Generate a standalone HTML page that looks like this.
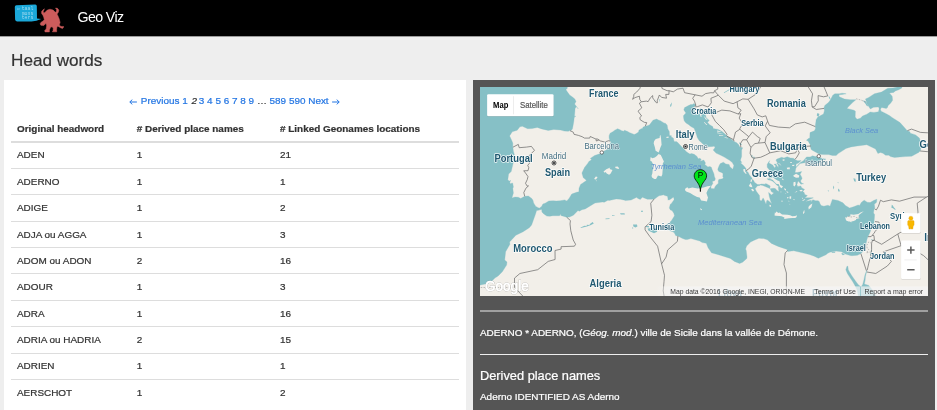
<!DOCTYPE html>
<html>
<head>
<meta charset="utf-8">
<title>Geo Viz</title>
<style>
html,body{margin:0;padding:0;}
body{width:937px;height:410px;overflow:hidden;background:#eeeeee;font-family:"Liberation Sans",sans-serif;color:#333;position:relative;font-size:9.94px;will-change:transform;}
#nav{position:absolute;left:0;top:0;width:937px;height:36px;background:#000;border-bottom:1px solid #9c9c9c;}
#brand{position:absolute;left:77.6px;top:9.2px;font-size:14.2px;line-height:17px;letter-spacing:-0.62px;color:#fff;white-space:nowrap;}
#logo{position:absolute;left:0;top:0;}
h1{position:absolute;left:11.1px;top:50.7px;margin:0;font-size:17.1px;line-height:20px;font-weight:normal;color:#333;white-space:nowrap;}
#left{position:absolute;left:3.5px;top:80px;width:462.5px;height:340px;background:#fff;}
#right{position:absolute;left:473px;top:80px;width:462px;height:340px;background:#555;color:#fff;}
#pag{position:absolute;left:0;top:14.3px;width:100%;text-align:center;font-size:9.94px;line-height:14px;white-space:nowrap;color:#333;}
#pag a{color:#2476e3;text-decoration:none;}
.c,#pag,h1,.txt{-webkit-text-stroke:0.22px currentColor;}
.c{position:absolute;white-space:nowrap;font-size:9.94px;line-height:14px;color:#333;}
.c.b{font-weight:bold;}
.ln{position:absolute;left:7.6px;width:447.8px;height:0.72px;background:#ddd;}
#map{position:absolute;left:6.9px;top:6.8px;width:448px;height:209.7px;background:#f2efe9;overflow:hidden;}
.hr{position:absolute;left:7px;width:448px;height:0;border-top:0.8px solid #eee;}
.txt{position:absolute;left:7px;white-space:nowrap;font-size:9.94px;line-height:14px;color:#fff;}
</style>
</head>
<body>
<div id="nav">
<svg id="logo" width="80" height="36" viewBox="0 0 80 36">
<path d="M16.4 5.3 Q14.8 5.4 14.8 7.0 L15.1 19.6 Q15.2 21.4 17.0 21.4 L31.5 21.5 Q36.5 21.3 41.2 18.9 L37.0 18.6 L36.8 6.0 Q36.8 4.4 35.2 4.4 Z" fill="#1ba8d9"/>
<g font-family="Liberation Mono, monospace" font-size="4.6" fill="#a3dbf0">
<text x="21.7" y="9.9" textLength="11.6" lengthAdjust="spacingAndGlyphs">taal</text>
<text x="21.7" y="14.6" textLength="11.6" lengthAdjust="spacingAndGlyphs">mons</text>
<text x="21.7" y="19.4" textLength="11.6" lengthAdjust="spacingAndGlyphs">ters</text>
<text x="17.0" y="9.5" font-size="2.8" textLength="3.0" lengthAdjust="spacingAndGlyphs">in</text>
</g>
<path d="M44.4 8.8 L41.8 11.0 L41.5 13.2 L43.0 15.4 L43.8 17.6 L44.3 19.8 L43.0 21.1 L40.9 22.4 L40.1 23.9 L40.9 25.3 L43.8 25.5 L45.3 23.9 L46.0 23.2 L46.6 25.6 L46.5 26.6 L46.2 29.0 L44.7 30.6 L45.0 31.9 L49.4 31.9 L49.4 29.9 L50.6 27.3 L52.0 26.8 L53.2 28.1 L53.1 30.6 L52.4 31.8 L56.7 31.8 L56.6 29.4 L57.0 26.8 L57.9 26.2 L60.5 27.7 L62.5 28.6 L63.2 27.4 L64.0 26.8 L62.3 26.4 L61.0 26.5 L59.2 25.0 L60.1 22.4 L59.2 18.9 L57.9 15.8 L57.0 14.1 L58.3 12.3 L58.8 10.1 L57.4 8.3 L55.5 8.1 L56.7 9.7 L56.4 11.4 L55.3 12.3 L53.1 10.1 L50.0 9.2 L47.3 10.1 L45.1 12.3 L43.8 13.2 L43.2 11.4Z" fill="#cd5c5c" stroke="#cd5c5c" stroke-width="0.5" stroke-linejoin="round"/>
</svg>
  <div id="brand">Geo Viz</div>
</div>
<h1>Head words</h1>
<div id="left">
  <div id="pag"><a><svg width="9.0" height="6" viewBox="0 0 9.0 6" style="vertical-align:-0.3px"><path d="M7.9 3H0.9M3.3 0.6L0.8 3L3.3 5.4" fill="none" stroke="#2476e3" stroke-width="1.0"/></svg> Previous</a> <a>1</a> <i style="margin-left:0.9px;margin-right:-0.9px">2</i> <a>3</a> <a>4</a> <a>5</a> <a>6</a> <a>7</a> <a>8</a> <a>9</a> &hellip; <a>589</a> <a>590</a> <a>Next <svg width="9.0" height="6" viewBox="0 0 9.0 6" style="vertical-align:-0.3px"><path d="M1.1 3H8.1M5.7 0.6L8.2 3L5.7 5.4" fill="none" stroke="#2476e3" stroke-width="1.0"/></svg></a></div>
  <div id="tbl">
<span class="c b" style="left:13.50px;top:41.65px">Original headword</span><span class="c b" style="left:133.25px;top:41.65px"># Derived place names</span><span class="c b" style="left:276.50px;top:41.65px"># Linked Geonames locations</span>
<div class="ln" style="top:61.19px;height:1.42px;"></div>
<span class="c" style="left:13.50px;top:68.45px">ADEN</span><span class="c" style="left:133.25px;top:68.45px">1</span><span class="c" style="left:276.50px;top:68.45px">21</span>
<div class="ln" style="top:87.91px;"></div>
<span class="c" style="left:13.50px;top:94.82px">ADERNO</span><span class="c" style="left:133.25px;top:94.82px">1</span><span class="c" style="left:276.50px;top:94.82px">1</span>
<div class="ln" style="top:114.28px;"></div>
<span class="c" style="left:13.50px;top:121.19px">ADIGE</span><span class="c" style="left:133.25px;top:121.19px">1</span><span class="c" style="left:276.50px;top:121.19px">2</span>
<div class="ln" style="top:140.65px;"></div>
<span class="c" style="left:13.50px;top:147.56px">ADJA ou AGGA</span><span class="c" style="left:133.25px;top:147.56px">1</span><span class="c" style="left:276.50px;top:147.56px">3</span>
<div class="ln" style="top:167.02px;"></div>
<span class="c" style="left:13.50px;top:173.93px">ADOM ou ADON</span><span class="c" style="left:133.25px;top:173.93px">2</span><span class="c" style="left:276.50px;top:173.93px">16</span>
<div class="ln" style="top:193.39px;"></div>
<span class="c" style="left:13.50px;top:200.30px">ADOUR</span><span class="c" style="left:133.25px;top:200.30px">1</span><span class="c" style="left:276.50px;top:200.30px">3</span>
<div class="ln" style="top:219.76px;"></div>
<span class="c" style="left:13.50px;top:226.67px">ADRA</span><span class="c" style="left:133.25px;top:226.67px">1</span><span class="c" style="left:276.50px;top:226.67px">16</span>
<div class="ln" style="top:246.13px;"></div>
<span class="c" style="left:13.50px;top:253.04px">ADRIA ou HADRIA</span><span class="c" style="left:133.25px;top:253.04px">2</span><span class="c" style="left:276.50px;top:253.04px">15</span>
<div class="ln" style="top:272.50px;"></div>
<span class="c" style="left:13.50px;top:279.41px">ADRIEN</span><span class="c" style="left:133.25px;top:279.41px">1</span><span class="c" style="left:276.50px;top:279.41px">1</span>
<div class="ln" style="top:298.87px;"></div>
<span class="c" style="left:13.50px;top:305.78px">AERSCHOT</span><span class="c" style="left:133.25px;top:305.78px">1</span><span class="c" style="left:276.50px;top:305.78px">2</span>
</div>
</div>
<div id="right">
  <div id="map">
<svg width="448" height="209.7" viewBox="0 0 448 209.7" style="position:absolute;left:0;top:0;display:block">
<rect x="0" y="0" width="448" height="210" fill="#f2efe9"/>
<path d="M-8.6 -15.9L85.9 -15.9L84.3 -2.0L86.7 -1.1L87.5 0.9L85.9 2.7L87.5 5.1L89.6 8.0L92.4 10.0L94.8 11.9L96.0 14.4L94.6 17.1L95.9 18.8L98.2 21.9L96.4 19.6L95.1 21.4L94.8 25.4L94.4 29.4L95.8 29.2L94.2 30.5L93.8 34.4L93.0 38.9L92.4 41.9L91.1 43.4L90.0 43.6L88.3 44.3L84.3 44.1L80.7 43.1L76.6 42.7L73.8 42.5L68.2 43.4L61.7 41.9L57.3 40.5L52.0 41.6L47.6 41.7L42.3 39.2L39.9 39.8L37.2 43.2L32.2 44.8L29.6 48.9L31.4 52.8L32.8 56.1L32.8 60.1L33.4 64.2L34.4 68.0L33.8 73.3L32.6 78.6L31.2 84.4L28.6 87.0L27.8 92.9L29.4 94.0L31.0 93.6L29.8 94.8L30.0 96.7L32.6 96.0L33.4 99.9L32.8 101.5L33.4 106.1L31.9 110.9L35.0 110.1L38.3 110.3L40.7 111.5L44.7 109.3L48.4 109.1L52.0 111.7L53.0 113.4L53.6 115.9L55.8 119.4L59.3 121.2L61.3 119.9L61.7 122.3L59.6 122.8L57.7 123.3L56.6 123.4L55.6 126.7L54.8 129.1L51.6 138.0L49.3 140.7L43.1 144.8L35.9 148.2L29.6 154.9L29.9 157.3L25.6 164.8L24.7 173.1L27.0 175.1L26.6 178.1L22.3 184.8L18.1 188.9L14.9 191.1L12.4 193.4L7.6 196.6L0.2 198.0L-2.1 200.7L-4.5 206.6L-8.6 215.6ZM59.3 121.2L61.3 119.9L62.9 117.0L65.1 116.2L68.8 114.0L73.2 113.8L76.1 114.0L80.1 113.8L84.6 112.9L86.8 114.0L89.2 111.2L91.7 107.1L96.6 105.3L98.9 104.8L99.0 101.3L100.6 97.5L103.5 95.5L106.4 93.5L105.3 92.3L103.3 90.7L102.7 88.8L101.9 86.0L102.9 83.9L104.5 80.5L107.7 76.4L108.9 74.4L111.6 72.8L110.3 71.4L114.6 68.5L119.0 67.1L122.1 65.5L124.3 63.9L127.1 62.4L129.8 60.4L130.6 59.3L129.8 57.5L130.3 56.0L131.3 55.3L130.0 54.1L129.1 51.1L129.1 48.7L130.1 46.2L132.8 44.7L134.4 43.4L137.6 41.7L140.0 42.8L141.6 43.7L143.7 44.2L144.5 43.2L147.7 44.5L149.2 45.6L152.4 46.7L154.2 47.5L155.9 46.8L158.6 45.1L158.9 43.2L161.2 41.7L162.1 41.7L163.2 40.1L165.1 39.2L167.3 38.8L169.4 38.0L170.9 36.1L173.0 33.2L176.6 32.1L178.9 33.3L180.4 33.7L183.9 35.9L185.7 36.4L187.2 38.2L187.7 41.7L189.3 44.5L189.5 48.6L191.4 48.7L191.2 50.0L193.3 51.1L194.1 54.4L197.0 54.7L199.8 57.8L203.2 61.3L206.4 64.7L209.9 67.1L211.5 66.6L214.2 67.3L217.0 69.4L218.2 71.8L219.7 71.3L221.2 72.2L220.2 74.2L222.4 73.5L223.8 73.1L225.5 76.0L224.8 77.5L227.9 79.9L229.9 79.4L231.5 80.4L231.9 82.1L234.0 86.9L234.3 89.3L235.3 91.7L234.9 93.5L232.3 94.6L232.9 96.6L231.5 98.4L230.9 99.9L231.1 101.5L234.2 101.8L235.2 99.4L235.9 98.5L238.4 96.3L238.2 94.0L238.8 92.5L242.6 91.7L243.4 90.3L242.8 89.8L243.0 86.5L241.4 85.4L238.8 84.4L237.8 82.8L238.0 81.6L239.4 78.1L240.4 76.5L243.4 75.2L245.8 77.0L249.1 77.5L249.9 79.7L252.8 82.3L253.9 78.6L252.3 75.4L249.5 73.3L244.2 70.1L240.7 68.2L236.0 66.1L233.1 62.9L234.1 62.0L235.2 60.1L233.7 59.3L232.7 59.5L228.5 59.7L225.6 58.8L223.4 57.5L220.8 55.0L219.3 53.7L217.3 50.6L216.7 48.4L215.4 44.5L214.3 41.7L213.7 40.9L211.3 39.8L209.6 38.5L208.8 37.7L206.0 36.0L204.2 33.8L203.7 31.6L203.4 28.8L205.9 25.9L203.8 22.9L204.6 20.6L206.7 19.6L208.5 18.5L210.7 17.6L212.6 17.6L213.9 16.4L215.7 17.9L215.4 19.1L214.1 19.3L213.7 20.4L214.3 22.7L214.6 24.5L216.8 28.0L218.9 25.4L220.0 21.6L221.1 21.6L223.2 23.4L224.8 25.5L226.2 30.8L229.3 33.5L227.5 35.3L229.3 37.5L232.9 39.7L233.1 41.4L235.7 42.1L237.3 42.2L239.4 43.0L242.0 44.5L245.3 47.3L246.6 48.7L250.7 51.8L251.6 52.4L254.1 54.4L256.7 55.7L258.7 57.7L259.6 59.7L260.9 60.4L262.7 60.8L261.6 63.3L261.6 66.1L261.6 69.6L260.4 73.3L261.8 75.4L260.4 75.7L264.0 79.1L266.0 81.6L266.0 83.6L268.2 85.4L269.3 87.7L272.1 91.2L271.8 92.5L273.1 92.7L274.7 95.5L277.6 97.6L280.3 97.6L280.8 97.0L285.2 97.2L285.6 96.6L287.3 97.2L290.2 98.9L289.8 101.6L288.2 100.8L282.8 98.4L280.4 97.9L280.0 98.4L277.3 98.9L275.1 101.7L276.5 104.6L279.5 108.6L279.7 112.0L279.7 113.0L281.2 114.0L281.8 113.2L283.1 110.9L284.0 112.4L286.0 117.3L286.8 113.6L287.8 113.2L291.9 116.8L290.7 114.3L289.3 109.6L288.6 105.4L289.2 105.9L291.5 107.9L292.3 107.3L293.9 106.1L291.5 104.8L290.2 101.8L293.1 101.3L295.3 101.6L296.5 103.0L298.6 104.6L298.8 103.8L298.3 100.8L298.7 99.4L296.3 97.7L295.1 96.2L292.7 94.3L290.5 93.2L288.5 92.9L287.0 91.7L289.8 91.7L289.0 90.4L289.8 87.0L291.1 88.0L291.2 89.6L293.1 89.2L292.7 87.5L290.7 84.4L288.2 81.6L287.2 80.2L287.2 77.3L289.7 73.6L289.0 75.4L289.4 76.2L292.7 78.1L294.7 80.9L295.9 79.1L293.9 77.3L295.9 77.0L298.3 80.7L298.2 78.1L296.7 76.3L297.5 76.0L301.6 78.9L299.9 76.5L297.4 75.7L295.9 73.1L297.1 72.0L301.6 70.3L304.0 71.0L307.2 69.8L310.4 71.0L313.5 71.3L314.9 72.4L317.7 73.8L321.2 73.6L318.5 76.0L316.1 77.0L315.9 79.8L316.1 80.2L315.0 85.6L317.3 85.5L321.7 84.6L320.1 87.3L321.6 89.9L322.1 91.4L320.5 94.1L321.7 96.3L323.6 96.7L320.9 97.2L319.5 95.6L318.1 94.1L316.9 97.7L317.7 99.4L320.8 98.9L321.7 100.7L324.6 102.4L322.7 104.4L324.2 105.6L324.7 107.6L327.4 108.6L324.6 111.2L326.0 110.8L333.3 110.8L329.0 112.5L325.5 114.4L328.0 114.0L331.4 113.2L331.0 114.4L330.6 115.4L332.8 112.7L335.6 113.7L338.1 113.7L339.7 115.0L339.5 115.7L341.1 118.5L343.9 119.2L348.0 118.2L350.0 119.2L351.4 115.2L352.4 112.4L358.0 113.5L362.9 115.8L365.4 118.5L369.6 121.0L373.6 119.8L378.1 118.0L379.5 118.4L381.5 115.2L384.2 113.2L387.2 115.2L390.2 115.6L393.6 113.5L396.9 112.2L396.6 115.3L394.3 117.2L394.8 120.4L394.0 122.7L393.5 126.0L394.6 127.6L394.3 132.2L393.9 136.5L392.4 139.7L391.0 141.9L390.1 145.2L388.7 148.0L388.0 149.6L387.0 152.3L386.3 155.4L385.9 157.0L385.2 159.5L384.3 162.1L383.5 163.3L382.6 164.7L380.9 166.6L377.5 168.2L371.8 168.7L370.2 168.5L365.4 167.1L361.5 164.7L355.7 164.0L349.8 165.2L347.4 166.6L346.0 167.8L338.3 171.2L334.3 169.2L329.4 167.5L324.5 166.3L313.8 163.8L307.6 164.5L307.2 162.5L298.2 159.4L291.5 156.4L287.3 152.8L283.6 151.6L281.9 151.6L278.9 151.3L273.7 153.4L270.6 155.1L266.6 159.0L265.6 162.1L266.2 163.4L267.0 170.1L266.8 171.5L262.6 175.2L259.6 176.5L254.5 174.4L250.4 171.5L238.5 167.7L231.5 165.8L228.1 160.7L226.4 156.6L227.5 156.4L222.2 155.6L219.7 154.0L210.9 151.6L207.2 152.6L205.3 152.5L202.1 151.3L197.9 149.0L195.8 148.7L194.3 145.8L192.9 144.8L191.3 144.3L186.1 142.1L185.8 138.0L189.3 135.7L191.4 133.7L194.5 128.8L193.8 126.2L192.0 123.4L190.4 122.9L189.3 120.9L190.3 117.2L191.2 116.7L194.1 112.7L193.7 110.3L192.9 110.6L189.7 112.7L187.7 113.0L188.1 112.5L187.5 109.3L184.2 108.3L184.0 107.8L179.0 108.8L175.2 111.6L172.7 112.2L167.3 112.2L162.4 110.3L160.2 112.4L157.5 111.2L156.8 110.2L151.1 113.0L145.5 113.6L145.7 113.4L140.2 112.2L136.1 112.0L129.2 113.5L127.9 113.2L124.3 115.2L122.2 115.1L115.0 116.0L105.2 121.9L101.9 122.7L99.3 124.2L98.0 123.5L93.4 128.2L89.5 130.1L86.5 130.2L85.0 129.7L80.8 128.4L80.6 126.8L79.5 128.7L72.8 128.7L69.8 129.3L66.8 129.1L63.5 126.7L61.9 125.0L61.7 122.3L59.6 122.8L57.7 123.3ZM316.1 80.0L317.7 78.4L320.1 75.7L323.4 73.7L326.6 69.9L330.2 69.9L332.6 68.8L335.3 69.6L338.5 69.6L338.9 69.8L340.7 71.0L346.0 72.2L343.5 72.9L340.9 73.2L337.1 74.6L339.9 75.6L337.7 76.3L335.5 76.2L330.4 76.5L330.6 74.9L328.6 74.7L329.0 76.0L325.0 75.7L320.1 76.5L317.7 79.1L316.1 80.4ZM339.5 67.2L331.4 62.8L330.4 60.1L330.2 57.7L328.2 54.2L326.4 53.3L328.4 51.6L329.8 51.1L330.0 45.6L334.4 43.8L335.5 41.8L335.3 38.7L335.9 34.8L336.1 32.8L337.9 29.9L343.5 27.1L344.4 23.7L344.0 20.8L344.8 18.5L348.4 15.6L350.4 12.9L352.8 8.2L354.9 6.8L359.3 6.8L362.1 6.2L366.2 6.8L362.1 7.4L358.9 7.8L359.3 9.8L364.5 12.1L370.2 12.7L375.9 12.7L372.6 15.6L368.6 19.6L367.0 21.4L374.0 23.2L375.4 24.2L375.2 29.9L377.0 32.3L380.4 31.2L382.5 29.1L386.9 27.2L390.2 25.0L393.9 25.4L398.5 24.8L398.9 23.1L400.1 21.4L401.1 24.2L405.7 26.5L409.8 28.8L412.0 30.4L420.0 35.6L425.3 41.4L427.0 43.4L429.7 44.7L430.4 46.2L435.6 47.9L439.4 51.1L441.0 57.1L440.7 62.6L440.1 64.0L439.0 65.3L431.7 69.2L425.3 69.6L414.5 70.4L410.4 69.6L408.8 68.2L405.6 68.2L402.9 66.3L400.5 65.5L397.9 66.5L395.6 62.0L388.4 58.6L386.8 57.7L377.1 59.0L371.0 59.9L366.0 61.5L361.3 64.6L358.2 66.6L356.1 68.6L352.4 68.5L348.6 67.6L343.5 67.6L339.9 67.2ZM399.3 23.1L399.0 21.2L398.5 20.0L393.6 20.2L390.4 21.9L387.2 17.3L385.5 11.9L388.8 10.4L394.4 6.8L401.5 5.1L407.8 1.2L413.0 0.9L418.7 -0.3L421.9 -0.9L421.9 0.9L418.7 2.7L415.4 3.9L413.6 5.4L409.4 5.9L412.2 9.2L412.6 13.3L410.6 16.2L408.2 18.5L406.4 21.6L401.7 20.4L400.5 21.9ZM367.0 179.3L365.8 182.7L367.4 186.5L370.0 190.6L372.8 194.7L375.2 198.9L377.1 203.0L378.3 208.4L379.9 215.6L400.1 215.6L392.8 203.4L388.8 198.4L384.3 197.0L385.1 193.8L385.5 189.2L386.4 185.7L387.0 183.5L386.6 183.4L384.9 188.3L383.9 192.9L382.7 197.5L381.1 200.0L378.3 197.7L375.7 194.3L372.5 189.7L369.8 185.5L368.3 182.7L367.9 179.3Z" fill="#86c0c6" stroke="#86c0c6" stroke-width="0.3" stroke-linejoin="round"/>
<path d="M123.5 84.6L126.3 82.3L130.3 80.6L129.5 82.1L132.5 83.1L130.7 86.5L129.1 87.8L126.7 86.5L125.7 84.9L124.7 85.8ZM135.2 79.7L137.6 79.4L139.2 81.2L138.4 82.1L135.4 80.9ZM114.2 91.7L115.8 89.6L117.6 90.1L116.2 92.2L115.0 92.5ZM115.6 93.6L117.3 93.8L116.6 94.3ZM180.4 47.8L181.0 51.1L181.6 57.7L180.4 60.4L179.6 63.1L178.6 65.5L175.6 63.7L174.8 59.9L173.7 56.6L174.0 54.4L175.2 52.6L176.6 51.8L179.6 51.1L179.8 48.9ZM178.6 66.9L180.8 68.0L182.0 70.4L183.9 74.6L182.8 76.5L182.8 80.9L182.3 87.5L181.4 89.6L178.0 88.6L176.0 91.9L174.4 92.0L172.3 90.7L171.5 89.1L172.3 86.5L172.7 82.8L173.5 81.2L172.3 79.9L173.0 77.0L171.5 74.3L170.4 74.0L170.3 72.2L170.7 69.9L172.3 71.3L174.8 70.4L176.8 69.0ZM205.4 101.5L207.3 100.2L208.5 101.5L212.3 100.5L217.7 101.6L223.6 100.5L227.5 99.2L230.9 98.7L228.0 102.5L226.4 106.1L227.4 108.9L228.0 110.5L226.9 114.4L224.4 114.0L221.2 113.4L219.6 110.5L217.1 110.1L213.7 108.2L210.1 106.1L206.2 104.6L204.9 103.0ZM220.0 121.2L222.0 122.2L221.6 123.2L220.4 122.4ZM186.1 50.0L188.5 49.5L188.5 50.9L186.5 50.8ZM221.2 23.1L223.6 24.8L222.4 25.9L220.8 24.8ZM220.0 23.7L221.2 27.1L221.6 29.9L220.4 29.4L220.0 26.5ZM223.6 28.8L226.4 31.6L227.7 33.3L225.6 32.2ZM224.4 35.0L227.3 38.0L226.4 38.0L224.0 35.6ZM236.9 43.6L241.0 44.3L240.6 44.8L237.4 44.7ZM236.9 45.6L243.4 46.5L239.4 46.4L237.4 46.2ZM239.0 48.0L243.4 48.4L243.0 48.9L239.0 48.7ZM244.6 50.0L247.8 51.1L247.4 51.4L244.6 50.6ZM263.2 82.3L265.2 82.1L265.2 84.4L266.8 86.5L265.6 86.7L263.6 84.4ZM270.9 92.2L272.1 92.7L271.7 94.8L270.5 95.1ZM268.8 98.9L270.5 96.0L272.1 98.9L272.3 100.3L270.5 99.9ZM271.0 102.5L272.9 101.8L274.1 103.8L272.9 104.6ZM289.4 117.7L291.1 118.2L290.7 119.9L289.6 119.5ZM288.9 92.0L291.5 90.9L292.7 90.1L294.7 91.7L297.5 93.6L299.5 94.3L300.3 97.9L303.0 99.3L301.7 101.3L299.9 99.9L298.6 97.1L296.7 97.0L295.3 95.8L292.8 93.0L291.1 92.2ZM294.9 125.2L295.5 126.2L296.3 124.5L298.5 126.0L299.5 125.4L302.1 127.5L307.4 127.8L310.2 128.2L312.2 129.2L315.3 129.1L316.9 128.2L316.6 130.1L315.3 131.1L312.4 131.1L308.7 131.3L304.2 131.9L304.4 130.4L301.6 129.3L299.5 129.1L295.7 128.8L294.5 128.5ZM332.4 116.6L331.4 120.3L328.7 122.4L328.4 120.0L330.0 117.9ZM324.2 122.7L324.6 125.2L323.5 127.2L323.0 125.7ZM321.9 113.7L324.2 112.2L325.4 112.4L323.4 113.7ZM319.2 103.5L321.3 102.8L323.0 103.8L320.9 104.6ZM314.5 105.6L317.3 104.0L316.9 105.1ZM313.5 95.3L315.4 94.8L315.7 97.4L314.5 99.4L313.4 98.4ZM313.3 88.6L316.1 86.7L319.3 88.6L318.9 90.4L316.1 90.7L313.7 89.4ZM306.8 80.7L309.6 80.2L309.9 82.3L307.2 82.3ZM302.5 72.6L304.5 72.2L304.4 73.8L302.8 73.8ZM310.0 74.9L312.1 74.9L311.6 76.0L310.2 75.7ZM311.9 78.1L314.5 77.8L314.1 79.1L312.5 79.1ZM302.0 91.2L303.6 92.2L303.2 93.2L302.2 92.5ZM304.0 101.2L306.0 102.0L306.0 103.8L304.4 102.5ZM306.4 104.2L308.4 105.1L308.0 105.9L306.6 105.1ZM309.5 109.6L311.2 109.3L311.1 111.7L309.6 111.7ZM307.2 109.9L308.6 110.1L308.0 111.4L307.2 111.2ZM301.2 113.7L302.8 113.7L302.4 114.7L301.4 114.5ZM300.7 104.2L301.6 105.1L300.7 105.6ZM309.5 116.7L310.3 117.2L309.8 117.7ZM312.9 112.4L314.9 112.2L314.1 113.2ZM308.4 113.7L309.6 114.0L308.8 114.7ZM305.4 106.3L306.2 106.6L305.8 107.3ZM321.9 110.6L323.0 111.2L322.1 111.9ZM365.1 130.1L366.4 130.7L367.9 129.3L370.2 129.6L370.4 128.2L370.4 127.2L373.6 127.8L378.3 127.0L380.5 125.5L383.8 124.2L379.9 127.2L378.7 128.2L378.7 129.9L379.7 131.5L379.1 131.3L376.2 131.9L375.9 132.9L373.8 133.9L371.4 134.4L371.3 135.4L370.0 134.5L368.6 134.6L366.2 133.6L365.8 132.6ZM191.3 142.1L193.7 142.7L193.3 144.3L191.3 143.8Z" fill="#f2efe9"/>
<path d="M373.4 91.2L375.4 91.7L375.9 94.8L374.2 94.3ZM358.1 101.5L359.7 103.0L359.3 105.1L358.1 104.0ZM353.4 98.4L354.2 99.9L353.6 102.5L353.1 101.0ZM357.3 95.3L358.9 95.8L358.1 96.3ZM347.6 103.0L349.2 104.0L348.4 104.6ZM341.5 75.2L344.4 75.2L344.4 76.0L341.5 76.0ZM334.3 77.9L336.7 78.1L336.3 78.8L334.7 78.8ZM329.8 77.5L331.4 77.9L330.6 78.7ZM190.5 20.2L190.1 17.9L192.1 15.2L191.3 19.1ZM173.5 16.7L174.4 13.8L175.6 12.1L174.1 15.0ZM179.2 15.6L179.6 12.1L180.3 12.1L179.6 14.4ZM243.8 5.4L251.1 1.3L251.2 2.1L244.2 5.9ZM258.8 55.5L260.8 56.1L262.0 57.9L260.4 57.7ZM271.5 68.0L272.5 68.3L272.3 70.4L271.5 70.1ZM273.7 69.6L274.7 70.1L274.3 71.7L273.4 71.2ZM391.2 162.6L391.8 163.0L391.6 166.3L390.6 168.7L390.2 167.8L390.8 165.4ZM391.4 152.0L392.4 152.0L392.2 153.3L391.6 153.3ZM411.4 120.7L413.0 121.2L415.0 122.7L415.8 122.4L413.8 120.2L412.6 118.2L411.8 117.7ZM140.0 126.2L144.5 126.2L144.9 127.4L140.8 127.4ZM153.0 137.5L157.0 137.5L157.4 139.5L155.4 140.4L153.4 139.5ZM152.1 139.9L153.4 140.9L152.6 141.9ZM167.5 141.4L171.5 140.9L176.4 142.4L177.2 144.8L174.0 146.3L170.7 144.8L168.3 143.4ZM165.9 139.0L169.1 139.0L168.7 140.4L165.9 139.9ZM100.5 140.4L104.5 138.8L106.5 139.0L106.9 137.8L109.3 138.0L110.2 136.8L112.6 135.1L113.8 136.5L111.0 138.0L106.9 139.5L100.9 141.1ZM125.5 131.6L129.5 131.3L129.5 132.1L125.5 132.3ZM132.0 128.2L134.8 128.4L134.4 129.1L132.0 128.9ZM161.0 123.7L163.1 123.7L162.6 125.0L161.0 124.7ZM362.1 165.9L365.0 167.3L362.9 168.2L361.3 166.8ZM351.6 164.9L355.7 164.5L354.9 165.7L352.0 165.7ZM382.7 13.6L385.5 14.1L388.0 18.5L387.2 19.6L385.1 16.2ZM337.5 25.9L339.5 27.1L338.3 29.9L336.7 28.2ZM348.4 9.2L349.6 9.8L350.8 12.7L349.6 12.1ZM404.9 19.1L408.2 19.6L407.4 20.8ZM451.8 138.0L455.8 138.0L455.0 142.9L451.8 141.9Z" fill="#86c0c6"/>
<path d="M32.9 60.2L38.3 57.4L39.2 60.7L46.4 60.1L51.4 59.4L54.5 63.4L48.5 69.2L49.6 71.2L49.3 76.5L47.7 78.3L48.8 80.7L48.0 83.7L43.7 83.8L45.5 86.0L48.0 89.6L47.2 92.7L45.5 96.3L47.2 99.1L48.5 98.9L45.9 101.2L43.8 105.6L44.7 109.3M90.0 43.7L93.2 45.1L94.0 47.3L98.4 48.4L102.1 49.7L104.5 51.1L109.7 51.1L110.2 49.5L116.2 52.2L116.6 51.7L118.6 52.6L120.2 53.9L124.7 55.0L128.7 53.7L130.1 54.1M116.2 52.2L116.2 54.0L118.6 53.3L118.6 52.6M165.3 39.2L166.7 35.6L164.3 35.3L160.2 32.8L159.8 30.5L161.6 29.0L158.0 24.2L161.8 20.8L159.4 16.2L161.4 14.8M161.4 14.8L159.8 12.5L159.4 9.2L155.0 10.6L152.6 12.3L153.8 9.2L153.8 7.4L156.6 5.1L159.8 1.5L161.0 -2.0L165.8 -4.9M161.4 14.8L166.3 14.1L168.1 14.7L170.3 10.9L172.7 8.6L172.7 10.9L174.0 12.7L176.4 15.8L177.4 15.8L177.2 13.8L179.4 8.0L181.6 10.4L186.5 11.2L185.7 7.4L188.9 7.4L189.1 3.7M189.1 3.7L187.1 3.7L182.0 1.5L181.6 -1.4L182.0 -5.0M189.1 3.7L193.3 4.8L197.4 2.1L203.0 1.2L204.6 5.7L215.1 7.8M215.1 7.8L222.0 9.2L225.6 6.6L230.9 5.7L233.7 5.9L234.6 3.7M234.6 3.7L237.8 2.1L237.4 -2.6L242.6 -9.8M215.1 7.8L212.7 11.3L214.5 14.2L215.9 18.5L215.3 18.5M214.3 20.0L217.6 19.6L222.4 17.9L228.1 20.0L231.3 15.8L230.9 11.3L236.1 9.2L238.3 8.2M234.6 3.7L236.5 6.2L238.3 8.2M238.3 8.2L244.2 14.1L253.1 16.7L257.1 14.8M257.1 14.8L262.8 11.9L268.1 12.3M268.1 12.3L276.5 6.8L279.3 2.1L282.2 -2.6L289.4 -9.8M257.1 14.8L257.9 20.8L261.2 23.1L258.8 26.5L258.1 27.0M258.1 27.0L249.9 23.9L241.8 23.1L236.1 25.4L231.7 23.1L231.7 27.7L235.3 34.4L239.4 38.4L243.8 42.8L247.0 47.3L246.5 48.6M247.0 49.2L253.5 52.7M258.1 27.0L260.8 26.7L259.2 31.1L262.8 36.7L260.0 41.2L259.8 42.3M259.8 42.3L255.5 45.1L253.5 52.7L254.1 54.2M259.8 42.3L268.8 49.7L266.6 52.8M266.6 52.8L262.8 52.8L260.4 56.6L260.9 60.4M266.6 52.8L270.9 60.4M268.8 49.7L272.5 45.1L277.3 49.5L280.2 51.4L278.5 56.1M270.9 60.4L274.9 56.6L278.5 56.1M270.9 60.4L270.1 66.3L272.1 70.6L274.1 71.2M274.1 71.2L271.3 79.1L268.4 82.3L266.0 83.6M274.1 71.2L280.6 70.3L285.4 68.2L289.8 65.9M289.8 65.9L300.7 63.7L308.8 66.9L315.7 65.8L317.3 62.0M317.3 62.0L319.3 65.8L316.9 70.1L314.9 72.4M317.3 62.0L322.6 58.2L327.0 59.3L330.9 59.0M289.8 65.9L285.0 55.5M278.5 56.1L285.0 55.5M285.0 55.5L286.2 49.5L290.2 45.8L285.2 38.9L287.6 34.2M268.1 12.3L274.1 21.9L277.3 27.9L282.2 29.9L285.8 28.8L287.6 34.2M287.6 34.2L289.4 38.4L298.3 40.1L309.6 40.8L315.3 36.9L324.7 35.2L335.3 39.6M332.2 20.0L331.4 13.8L332.6 6.8L327.4 -1.4L324.2 -7.4M332.2 20.0L336.3 22.5L344.0 21.4M332.2 20.0L334.7 19.6L338.3 13.8L338.1 8.6L343.5 9.8L347.8 8.9L346.0 4.5L343.5 -1.4L340.3 -8.6M427.5 43.6L431.6 42.1L440.5 45.4L447.7 45.8L455.8 49.5M440.1 64.0L447.7 64.7L455.0 68.5M394.6 121.9L396.4 122.9L398.5 119.2L400.5 113.2L403.3 114.7L411.4 112.9L419.5 114.2L434.0 110.1L446.5 110.1M446.5 110.1L451.8 107.6L459.8 108.1M446.5 110.1L437.2 116.2L438.0 125.2L435.6 136.8L417.8 147.0M417.8 147.0L401.7 157.3L394.4 153.5L392.4 153.5M417.8 147.0L421.1 158.7M421.1 158.7L403.3 164.9L411.4 174.4L407.4 179.0L395.8 186.5L386.8 185.0M421.1 158.7L430.8 160.7L443.7 168.7L459.8 183.7M395.0 134.6L398.9 135.1L400.1 139.0L395.2 144.3L394.0 146.5L392.2 148.2M388.0 149.7L391.2 149.6L392.2 148.2M392.2 148.2L394.0 148.7L394.4 153.0L392.4 153.5M392.4 153.5L391.6 156.4L391.6 162.6L390.8 168.7L388.8 176.2L387.2 183.2M380.9 166.6L386.4 183.7M307.6 163.5L305.2 165.9L304.0 177.6L306.4 186.0L306.4 233.4M197.9 149.0L197.4 154.4L187.7 163.0L186.1 170.1L181.6 176.9M174.3 111.8L170.7 116.2L171.9 128.2L171.1 134.6L165.1 139.9L165.1 142.9L169.9 149.6L177.6 159.2L181.6 176.9M181.6 176.9L184.5 188.3L184.0 194.7L183.2 203.9L184.5 211.1L180.4 214.7M86.7 130.2L90.4 133.6L90.0 137.0L90.8 143.8L93.2 153.0L95.6 157.3L94.4 159.2L81.1 159.7L81.1 162.1L75.0 163.5L75.1 172.5L68.2 174.4L57.7 182.7L39.9 186.5L34.5 191.1L34.5 200.5L43.9 210.2L52.0 215.6" fill="none" stroke="#666" stroke-width="0.7" stroke-linejoin="round"/>
<path d="M-2.1 200.5L34.5 200.5M391.6 156.4L388.8 154.9L386.8 158.3L387.2 161.6L388.8 162.6L386.4 165.9L390.4 164.9M376.0 11.8L380.7 12.9L386.8 15.6M367.9 129.3L371.0 130.1L374.2 129.3L376.7 130.6L379.1 130.6" fill="none" stroke="#9a9a9a" stroke-width="0.6" stroke-dasharray="1.6 1.2"/>
<g font-family="Liberation Sans, sans-serif">
<text x="108.9" y="9.8" font-size="10.00" fill="#1f5870" font-weight="bold" font-style="normal" text-anchor="start" stroke="#fff" stroke-opacity="0.85" stroke-width="1.6" paint-order="stroke" stroke-linejoin="round" textLength="29.5" lengthAdjust="spacingAndGlyphs">France</text>
<text x="14.5" y="75.2" font-size="10.00" fill="#1f5870" font-weight="bold" font-style="normal" text-anchor="start" stroke="#fff" stroke-opacity="0.85" stroke-width="1.6" paint-order="stroke" stroke-linejoin="round" textLength="38.0" lengthAdjust="spacingAndGlyphs">Portugal</text>
<text x="65.0" y="89.3" font-size="10.00" fill="#1f5870" font-weight="bold" font-style="normal" text-anchor="start" stroke="#fff" stroke-opacity="0.85" stroke-width="1.6" paint-order="stroke" stroke-linejoin="round" textLength="25.0" lengthAdjust="spacingAndGlyphs">Spain</text>
<text x="195.8" y="51.5" font-size="10.00" fill="#1f5870" font-weight="bold" font-style="normal" text-anchor="start" stroke="#fff" stroke-opacity="0.85" stroke-width="1.6" paint-order="stroke" stroke-linejoin="round" textLength="18.8" lengthAdjust="spacingAndGlyphs">Italy</text>
<text x="211.2" y="27.5" font-size="8.40" fill="#1f5870" font-weight="bold" font-style="normal" text-anchor="start" stroke="#fff" stroke-opacity="0.85" stroke-width="1.6" paint-order="stroke" stroke-linejoin="round" textLength="25.0" lengthAdjust="spacingAndGlyphs">Croatia</text>
<text x="249.5" y="5.1" font-size="8.40" fill="#1f5870" font-weight="bold" font-style="normal" text-anchor="start" stroke="#fff" stroke-opacity="0.85" stroke-width="1.6" paint-order="stroke" stroke-linejoin="round" textLength="30.0" lengthAdjust="spacingAndGlyphs">Hungary</text>
<text x="287.0" y="19.8" font-size="10.00" fill="#1f5870" font-weight="bold" font-style="normal" text-anchor="start" stroke="#fff" stroke-opacity="0.85" stroke-width="1.6" paint-order="stroke" stroke-linejoin="round" textLength="38.8" lengthAdjust="spacingAndGlyphs">Romania</text>
<text x="261.2" y="38.7" font-size="8.40" fill="#1f5870" font-weight="bold" font-style="normal" text-anchor="start" stroke="#fff" stroke-opacity="0.85" stroke-width="1.6" paint-order="stroke" stroke-linejoin="round" textLength="22.5" lengthAdjust="spacingAndGlyphs">Serbia</text>
<text x="290.0" y="62.8" font-size="10.00" fill="#1f5870" font-weight="bold" font-style="normal" text-anchor="start" stroke="#fff" stroke-opacity="0.85" stroke-width="1.6" paint-order="stroke" stroke-linejoin="round" textLength="37.0" lengthAdjust="spacingAndGlyphs">Bulgaria</text>
<text x="271.8" y="89.8" font-size="10.00" fill="#1f5870" font-weight="bold" font-style="normal" text-anchor="start" stroke="#fff" stroke-opacity="0.85" stroke-width="1.6" paint-order="stroke" stroke-linejoin="round" textLength="31.2" lengthAdjust="spacingAndGlyphs">Greece</text>
<text x="376.2" y="94.3" font-size="10.00" fill="#1f5870" font-weight="bold" font-style="normal" text-anchor="start" stroke="#fff" stroke-opacity="0.85" stroke-width="1.6" paint-order="stroke" stroke-linejoin="round" textLength="30.0" lengthAdjust="spacingAndGlyphs">Turkey</text>
<text x="439.5" y="61.0" font-size="10.00" fill="#1f5870" font-weight="bold" font-style="normal" text-anchor="start" stroke="#fff" stroke-opacity="0.85" stroke-width="1.6" paint-order="stroke" stroke-linejoin="round" textLength="36.0" lengthAdjust="spacingAndGlyphs">Georgia</text>
<text x="33.2" y="165.3" font-size="10.00" fill="#1f5870" font-weight="bold" font-style="normal" text-anchor="start" stroke="#fff" stroke-opacity="0.85" stroke-width="1.6" paint-order="stroke" stroke-linejoin="round" textLength="39.2" lengthAdjust="spacingAndGlyphs">Morocco</text>
<text x="109.5" y="200.3" font-size="10.00" fill="#1f5870" font-weight="bold" font-style="normal" text-anchor="start" stroke="#fff" stroke-opacity="0.85" stroke-width="1.6" paint-order="stroke" stroke-linejoin="round" textLength="32.0" lengthAdjust="spacingAndGlyphs">Algeria</text>
<text x="169.2" y="143.2" font-size="8.40" fill="#1f5870" font-weight="bold" font-style="normal" text-anchor="start" stroke="#fff" stroke-opacity="0.85" stroke-width="1.6" paint-order="stroke" stroke-linejoin="round" textLength="25.0" lengthAdjust="spacingAndGlyphs">Tunisia</text>
<text x="380.0" y="142.5" font-size="8.40" fill="#1f5870" font-weight="bold" font-style="normal" text-anchor="start" stroke="#fff" stroke-opacity="0.85" stroke-width="1.6" paint-order="stroke" stroke-linejoin="round" textLength="30.0" lengthAdjust="spacingAndGlyphs">Lebanon</text>
<text x="366.8" y="163.7" font-size="8.40" fill="#1f5870" font-weight="bold" font-style="normal" text-anchor="start" stroke="#fff" stroke-opacity="0.85" stroke-width="1.6" paint-order="stroke" stroke-linejoin="round" textLength="19.0" lengthAdjust="spacingAndGlyphs">Israel</text>
<text x="390.0" y="172.2" font-size="8.40" fill="#1f5870" font-weight="bold" font-style="normal" text-anchor="start" stroke="#fff" stroke-opacity="0.85" stroke-width="1.6" paint-order="stroke" stroke-linejoin="round" textLength="24.5" lengthAdjust="spacingAndGlyphs">Jordan</text>
<text x="410.0" y="131.7" font-size="8.40" fill="#1f5870" font-weight="bold" font-style="normal" text-anchor="start" stroke="#fff" stroke-opacity="0.85" stroke-width="1.6" paint-order="stroke" stroke-linejoin="round" textLength="19.0" lengthAdjust="spacingAndGlyphs">Syria</text>
<text x="444.2" y="154.1" font-size="10.00" fill="#1f5870" font-weight="bold" font-style="normal" text-anchor="start" stroke="#fff" stroke-opacity="0.85" stroke-width="1.6" paint-order="stroke" stroke-linejoin="round" textLength="18.0" lengthAdjust="spacingAndGlyphs">Iraq</text>
<text x="238.0" y="210.2" font-size="10.00" fill="#1f5870" font-weight="bold" font-style="normal" text-anchor="start" stroke="#fff" stroke-opacity="0.85" stroke-width="1.6" paint-order="stroke" stroke-linejoin="round" textLength="24.0" lengthAdjust="spacingAndGlyphs">Libya</text>
<text x="332.0" y="210.2" font-size="10.00" fill="#1f5870" font-weight="bold" font-style="normal" text-anchor="start" stroke="#fff" stroke-opacity="0.85" stroke-width="1.6" paint-order="stroke" stroke-linejoin="round" textLength="26.0" lengthAdjust="spacingAndGlyphs">Egypt</text>
<circle cx="74.0" cy="76.0" r="2.0" fill="#fff" stroke="#222" stroke-width="0.8"/><circle cx="74.0" cy="76.0" r="1.1" fill="#222"/>
<text x="61.8" y="71.8" font-size="8.30" fill="#3f6a7c" font-weight="normal" font-style="normal" text-anchor="start" stroke="#fff" stroke-opacity="0.85" stroke-width="1.0" paint-order="stroke" stroke-linejoin="round" textLength="24.5" lengthAdjust="spacingAndGlyphs">Madrid</text>
<circle cx="121.8" cy="65.5" r="1.7" fill="#fff" stroke="#444" stroke-width="0.7"/>
<text x="104.5" y="62.5" font-size="8.30" fill="#3f6a7c" font-weight="normal" font-style="normal" text-anchor="start" stroke="#fff" stroke-opacity="0.85" stroke-width="1.0" paint-order="stroke" stroke-linejoin="round" textLength="34.5" lengthAdjust="spacingAndGlyphs">Barcelona</text>
<circle cx="205.5" cy="59.5" r="2.0" fill="#fff" stroke="#222" stroke-width="0.8"/><circle cx="205.5" cy="59.5" r="1.1" fill="#222"/>
<text x="208.6" y="62.9" font-size="8.30" fill="#3f6a7c" font-weight="normal" font-style="normal" text-anchor="start" stroke="#fff" stroke-opacity="0.85" stroke-width="1.0" paint-order="stroke" stroke-linejoin="round" textLength="19.2" lengthAdjust="spacingAndGlyphs">Rome</text>
<circle cx="338.8" cy="69.2" r="1.7" fill="#fff" stroke="#444" stroke-width="0.7"/>
<text x="325.0" y="79.5" font-size="8.30" fill="#3f6a7c" font-weight="normal" font-style="normal" text-anchor="start" stroke="#fff" stroke-opacity="0.85" stroke-width="1.0" paint-order="stroke" stroke-linejoin="round" textLength="27.0" lengthAdjust="spacingAndGlyphs">Istanbul</text>
<text x="170.8" y="81.8" font-size="8.00" fill="#5b8fd0" font-weight="normal" font-style="italic" text-anchor="start" stroke="#fff" stroke-opacity="0.85" stroke-width="0.0" paint-order="stroke" stroke-linejoin="round" textLength="50.5" lengthAdjust="spacingAndGlyphs">Tyrrhenian Sea</text>
<text x="365.0" y="46.1" font-size="8.00" fill="#5b8fd0" font-weight="normal" font-style="italic" text-anchor="start" stroke="#fff" stroke-opacity="0.85" stroke-width="0.0" paint-order="stroke" stroke-linejoin="round" textLength="33.2" lengthAdjust="spacingAndGlyphs">Black Sea</text>
<text x="218.0" y="138.3" font-size="8.00" fill="#5b8fd0" font-weight="normal" font-style="italic" text-anchor="start" stroke="#fff" stroke-opacity="0.85" stroke-width="0.0" paint-order="stroke" stroke-linejoin="round" textLength="64.0" lengthAdjust="spacingAndGlyphs">Mediterranean Sea</text>
</g>
<path d="M220.4 104.6 C220.2 98.1 217.8 96.0 215.0 91.9 A6.2 6.2 0 1 1 225.8 91.9 C223.0 96.0 220.6 98.1 220.4 104.6Z" fill="#00e61a" stroke="#000" stroke-width="0.75" stroke-linejoin="round"/>
<text x="220.5" y="91.5" font-family="Liberation Sans, sans-serif" font-size="8.2" text-anchor="middle" fill="#000">P</text>
<rect x="7.3" y="8.0" width="66.3" height="22.1" rx="1.4" fill="#000" opacity="0.12"/>
<rect x="7.1" y="7.2" width="66.5" height="22.1" rx="1.4" fill="#fff"/>
<rect x="33.0" y="9.2" width="0.7" height="18.1" fill="#e6e6e6"/>
<text x="13.1" y="20.6" font-family="Liberation Sans, sans-serif" font-size="8.5" font-weight="bold" fill="#000" textLength="15.3" lengthAdjust="spacingAndGlyphs">Map</text>
<text x="39.9" y="20.6" font-family="Liberation Sans, sans-serif" font-size="8.5" fill="#565656" stroke="#565656" stroke-width="0.2" textLength="27.9" lengthAdjust="spacingAndGlyphs">Satellite</text>
<rect x="421.3" y="127.1" width="19.5" height="19.6" rx="1.4" fill="#000" opacity="0.12"/>
<rect x="421.1" y="126.3" width="19.5" height="19.6" rx="1.4" fill="#fff"/>
<g fill="#f9b800" stroke="#de9400" stroke-width="0.3">
<path d="M428.7 133.6 h4.4 q1.0 0 1.0 1.0 v3.4 q0 0.6 -0.7 0.6 l-0.1 0 l-0.5 3.5 h-1.6 l-0.3 -2.2 l-0.3 2.2 h-1.6 l-0.5 -3.5 q-0.8 0 -0.8 -0.6 v-3.4 q0 -1.0 1.0 -1.0z"/>
<circle cx="430.9" cy="131.2" r="2.05"/>
</g>
<rect x="421.3" y="154.4" width="19.5" height="38.6" rx="1.4" fill="#000" opacity="0.12"/>
<rect x="421.1" y="153.6" width="19.5" height="38.6" rx="1.4" fill="#fff"/>
<rect x="424.4" y="172.6" width="12.3" height="0.7" fill="#e6e6e6"/>
<path d="M427.2 163.1h7.4M430.9 159.4v7.4M427.2 182.8h7.4" stroke="#5a5a5a" stroke-width="1.5" fill="none"/>
<text x="5.0" y="204.0" font-family="Liberation Sans, sans-serif" font-size="14.6" fill="#fff" stroke="#777" stroke-opacity="0.5" stroke-width="1.0" paint-order="stroke" textLength="43.7" lengthAdjust="spacingAndGlyphs">Google</text><text x="5.0" y="204.0" font-family="Liberation Sans, sans-serif" font-size="14.6" fill="#fff" stroke="#fff" stroke-width="0.35" textLength="43.7" lengthAdjust="spacingAndGlyphs">Google</text>
<defs><linearGradient id="ag" x1="0" x2="1" y1="0" y2="0"><stop offset="0" stop-color="#f5f5f5" stop-opacity="0"/><stop offset="1" stop-color="#f5f5f5" stop-opacity="0.7"/></linearGradient></defs>
<rect x="176" y="199.4" width="12" height="10.1" fill="url(#ag)"/>
<rect x="188" y="199.4" width="142" height="10.1" fill="#f5f5f5" opacity="0.7"/>
<rect x="330" y="199.4" width="50.2" height="10.1" fill="#f5f5f5" opacity="0.7"/>
<rect x="380.9" y="199.4" width="67.1" height="10.1" fill="#f5f5f5" opacity="0.7"/>
<text x="190.3" y="206.7" font-family="Liberation Sans, sans-serif" font-size="7.2" fill="#3a3a3a" textLength="134.7" lengthAdjust="spacingAndGlyphs">Map data ©2016 Google, INEGI, ORION-ME</text>
<text x="334.3" y="206.7" font-family="Liberation Sans, sans-serif" font-size="7.2" fill="#3a3a3a" textLength="41.6" lengthAdjust="spacingAndGlyphs">Terms of Use</text>
<text x="384.4" y="206.7" font-family="Liberation Sans, sans-serif" font-size="7.2" fill="#3a3a3a" textLength="58.7" lengthAdjust="spacingAndGlyphs">Report a map error</text>
</svg>
  </div>
  <div class="hr" style="top:230px;border-top:2px solid #a0a0a0"></div>
  <div class="txt" style="top:246.2px">ADERNO * ADERNO, (<i>Géog. mod.</i>) ville de Sicile dans la vallée de Démone.</div>
  <div class="hr" style="top:274px"></div>
  <div class="txt" style="top:287.3px;font-size:12.8px;line-height:18px;">Derived place names</div>
  <div class="txt" style="top:310px">Aderno IDENTIFIED AS Aderno</div>
</div>
</body>
</html>
